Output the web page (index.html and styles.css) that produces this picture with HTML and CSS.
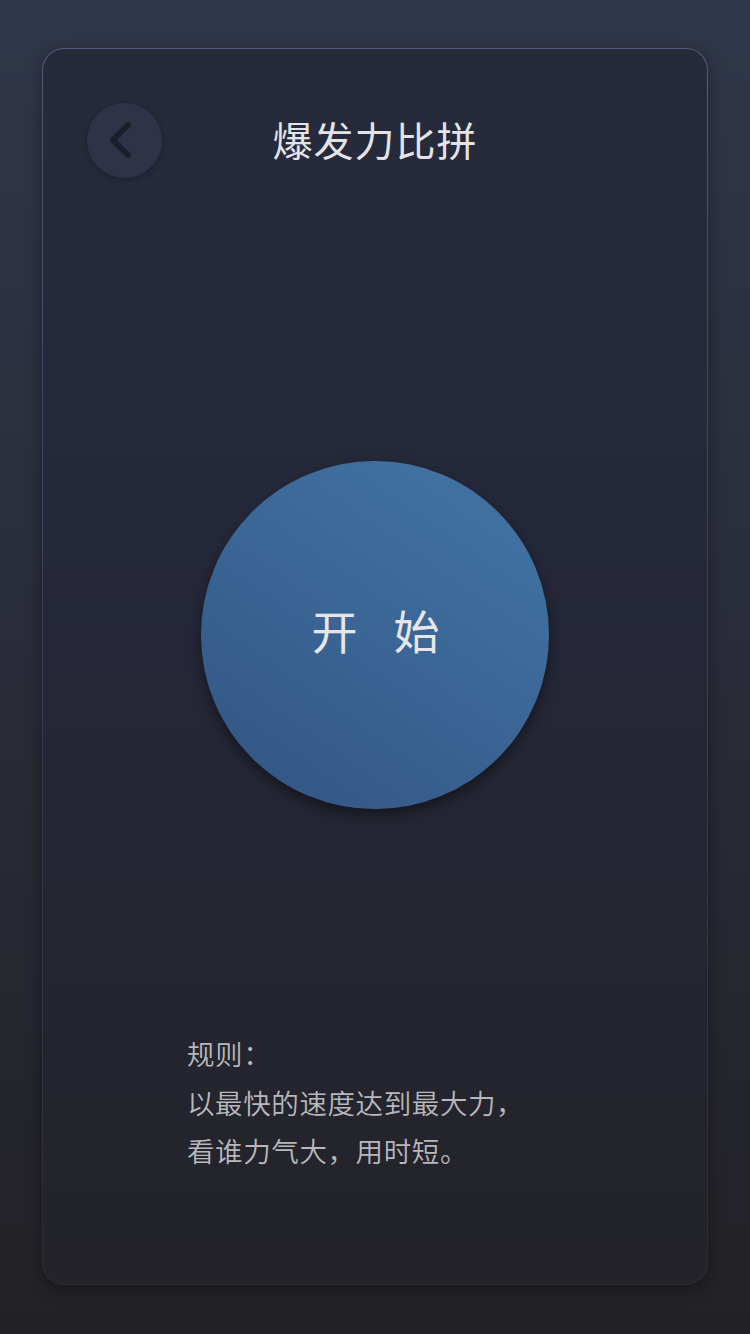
FILE: index.html
```html
<!DOCTYPE html>
<html lang="zh-CN">
<head>
<meta charset="utf-8">
<title>爆发力比拼</title>
<link rel="stylesheet" href="styles.css">
</head>
<body>
<div class="card">
  <div class="header">
    <button class="back" aria-label="返回">
      <svg width="75" height="75" viewBox="0 0 75 75">
        <path d="M41 22 L26 37 L41 52" fill="none" stroke="#1b1e29" stroke-width="6" stroke-linecap="round" stroke-linejoin="round"/>
      </svg>
    </button>
    <h1 class="title">爆发力比拼</h1>
    <div class="spacer"></div>
  </div>
  <div class="center">
    <div class="start">开始</div>
  </div>
  <div class="rules">
    <p>规则：</p>
    <p>以最快的速度达到最大力，</p>
    <p>看谁力气大，用时短。</p>
  </div>
</div>
</body>
</html>
```
FILE: styles.css
```css
html, body {
  margin: 0;
  padding: 0;
}
body {
  width: 750px;
  height: 1334px;
  background: linear-gradient(180deg, #30374a 0%, #2a2d3a 45%, #222226 100%);
  font-family: "Noto Sans CJK SC", "Noto Sans", sans-serif;
  padding-top: 48px;
  box-sizing: border-box;
}
.card {
  margin: 0 42px;
  height: 1237px;
  box-sizing: border-box;
  border-radius: 22px;
  border: 1.5px solid transparent;
  background:
    linear-gradient(180deg, #262b3b 0%, #25283a 40%, #232329 100%) padding-box,
    linear-gradient(180deg, #535b7b 0%, #3a3f55 45%, #2a2c36 100%) border-box;
  box-shadow: 0 4px 16px rgba(0, 0, 0, 0.35);
  display: flex;
  flex-direction: column;
  padding: 54px 44px 0 44px;
}
.header {
  display: flex;
  align-items: center;
  height: 75px;
}
.back {
  width: 75px;
  height: 75px;
  border-radius: 50%;
  border: none;
  padding: 0;
  background: #2e3347;
  box-shadow: 0 2px 6px rgba(0, 0, 0, 0.25);
  display: flex;
  align-items: center;
  justify-content: center;
  flex: none;
}
.back svg {
  display: block;
}
.title {
  flex: 1;
  margin: 0;
  text-align: center;
  font-size: 40px;
  font-weight: 400;
  color: #e4e4e6;
  letter-spacing: 1px;
  line-height: 75px;
  padding-bottom: 3px;
}
.spacer {
  width: 75px;
  flex: none;
}
.center {
  display: flex;
  justify-content: center;
  margin-top: 283px;
  margin-left: -1px;
}
.start {
  width: 348px;
  height: 348px;
  border-radius: 50%;
  background: linear-gradient(215deg, #4276a4 0%, #3b6797 45%, #325482 100%);
  box-shadow: 0 6px 14px rgba(0, 0, 0, 0.45);
  display: flex;
  align-items: center;
  justify-content: center;
  color: #e6e6e8;
  font-size: 46px;
  font-weight: 400;
  letter-spacing: 36px;
  padding-left: 38px;
  padding-bottom: 12px;
  box-sizing: border-box;
  line-height: 1;
}
.rules {
  margin-top: 220px;
  padding-left: 100px;
  color: #b8b8bc;
  font-size: 27.5px;
  font-weight: 350;
  letter-spacing: 0.6px;
  line-height: 48.5px;
}
.rules p {
  margin: 0;
}
```
